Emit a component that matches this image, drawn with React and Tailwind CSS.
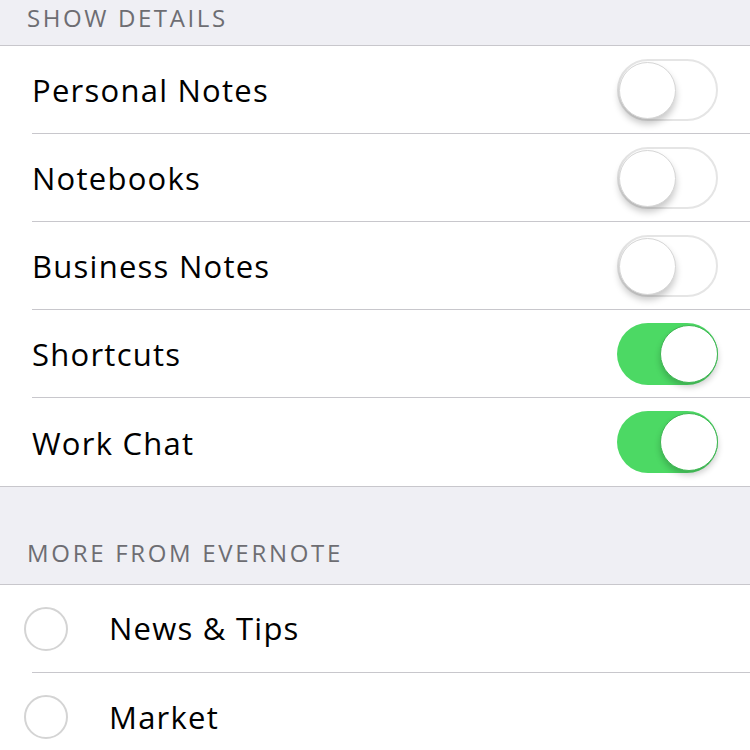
import React from "react";

function Toggle({ on }) {
  return on ? (
    <div className="relative w-[101px] h-[62px] rounded-full bg-[#4cd964]">
      <div className="absolute right-0 top-0 w-[58px] h-[62px] flex items-center justify-center">
        <div className="w-[58px] h-[58px] rounded-full bg-white border-[1.5px] border-[#3fb653] shadow-[0_4px_6px_rgba(0,0,0,0.2)]" />
      </div>
    </div>
  ) : (
    <div className="relative w-[101px] h-[62px] rounded-full bg-white border-[2px] border-[#e5e5e5]">
      <div className="absolute left-0 top-[1px] w-[57px] h-[57px] rounded-full bg-white border border-[#d6d6d6] shadow-[0_5px_7px_rgba(0,0,0,0.22)]" />
    </div>
  );
}

function ToggleRow({ label, on, last }) {
  return (
    <div className="flex h-[88px] pl-[32px]">
      <div className={`flex flex-1 items-center justify-between pr-[32px] ${last ? "" : "border-b border-[#c8c7cc]"}`}>
        <span className="text-[31px] text-black tracking-[1.25px] mt-[2px]">{label}</span>
        <Toggle on={on} />
      </div>
    </div>
  );
}

function CircleRow({ label, last }) {
  return (
    <div className="flex h-[88px]">
      <div className="w-[32px] flex items-center">
        <div className="ml-[24px] w-[44px] h-[44px] shrink-0 rounded-full border-[2px] border-[#d4d4d4]" />
      </div>
      <div className={`flex flex-1 items-center ${last ? "" : "border-b border-[#c8c7cc]"}`}>
        <span className="ml-[77px] text-[31px] text-black tracking-[1.25px]">{label}</span>
      </div>
    </div>
  );
}

export default function App() {
  return (
    <div className="w-[750px] h-[750px] overflow-hidden bg-[#efeff4]" style={{ fontFamily: '"Open Sans", "Noto Sans", sans-serif' }}>
      <div className="h-[46px] flex items-center pl-[27px] border-b border-[#c8c7cc]">
        <span className="text-[24px] text-[#6d6d72] tracking-[2.6px] -mt-[10px]">SHOW DETAILS</span>
      </div>
      <div className="bg-white border-b border-[#c8c7cc]">
        <ToggleRow label="Personal Notes" on={false} />
        <ToggleRow label="Notebooks" on={false} />
        <ToggleRow label="Business Notes" on={false} />
        <ToggleRow label="Shortcuts" on={true} />
        <ToggleRow label="Work Chat" on={true} last />
      </div>
      <div className="h-[98px] flex items-end pl-[27px] pb-[13px] border-b border-[#c8c7cc]">
        <span className="text-[24px] text-[#6d6d72] tracking-[2.7px]">MORE FROM EVERNOTE</span>
      </div>
      <div className="bg-white">
        <CircleRow label="News & Tips" />
        <CircleRow label="Market" last />
      </div>
    </div>
  );
}
